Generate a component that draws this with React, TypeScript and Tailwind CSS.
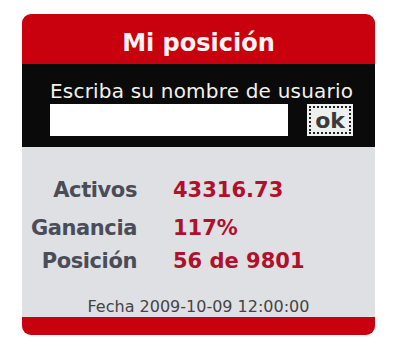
const ROWS = [
  { label: "Activos", value: "43316.73", mt: "mt-[29px]" },
  { label: "Ganancia", value: "117%", mt: "mt-[10px]" },
  { label: "Posición", value: "56 de 9801", mt: "mt-[5px]" },
];

export default function App() {
  return (
    <div className="w-[400px] h-[346px] bg-white pt-[14px] pl-[22px] font-['DejaVu_Sans',sans-serif]">
      <div className="w-[353px] rounded-[9px] overflow-hidden">
        <div className="h-[50px] bg-[#c9000e] flex items-center justify-center">
          <span className="text-[#fff3f3] text-[24px] font-bold leading-none pt-[8px]">Mi posición</span>
        </div>
        <div className="h-[83px] bg-[#0b0a0a] pl-[28px] pt-[16px]">
          <p className="text-[#f2f2ea] text-[20px] leading-[22px] tracking-[0.2px]">Escriba su nombre de usuario</p>
          <div className="flex items-center mt-[2px]">
            <div className="w-[238px] h-[32px] bg-white" />
            <button className="ml-[19px] w-[46px] h-[32px] bg-[#eef0f0] p-[2px]">
              <div className="h-full border-2 border-dotted border-[#222] flex items-end justify-center">
                <span className="text-[#3a3a3a] text-[22px] font-bold leading-none">ok</span>
              </div>
            </button>
          </div>
        </div>
        <div className="h-[170px] bg-[#dfe0e4] flex flex-col">
          {ROWS.map((r) => (
            <div key={r.label} className={`flex items-center leading-[28px] ${r.mt}`}>
              <span className="w-[115px] text-right text-[21px] font-bold text-[#4a4d58] tracking-[-0.4px]">{r.label}</span>
              <span className="ml-[36px] text-[21px] font-bold text-[#b0102c]">{r.value}</span>
            </div>
          ))}
          <p className="mt-auto mb-0 text-center text-[16px] text-[#444] leading-[20px]">Fecha 2009-10-09 12:00:00</p>
        </div>
        <div className="h-[18px] bg-[#c9000e]" />
      </div>
    </div>
  );
}
